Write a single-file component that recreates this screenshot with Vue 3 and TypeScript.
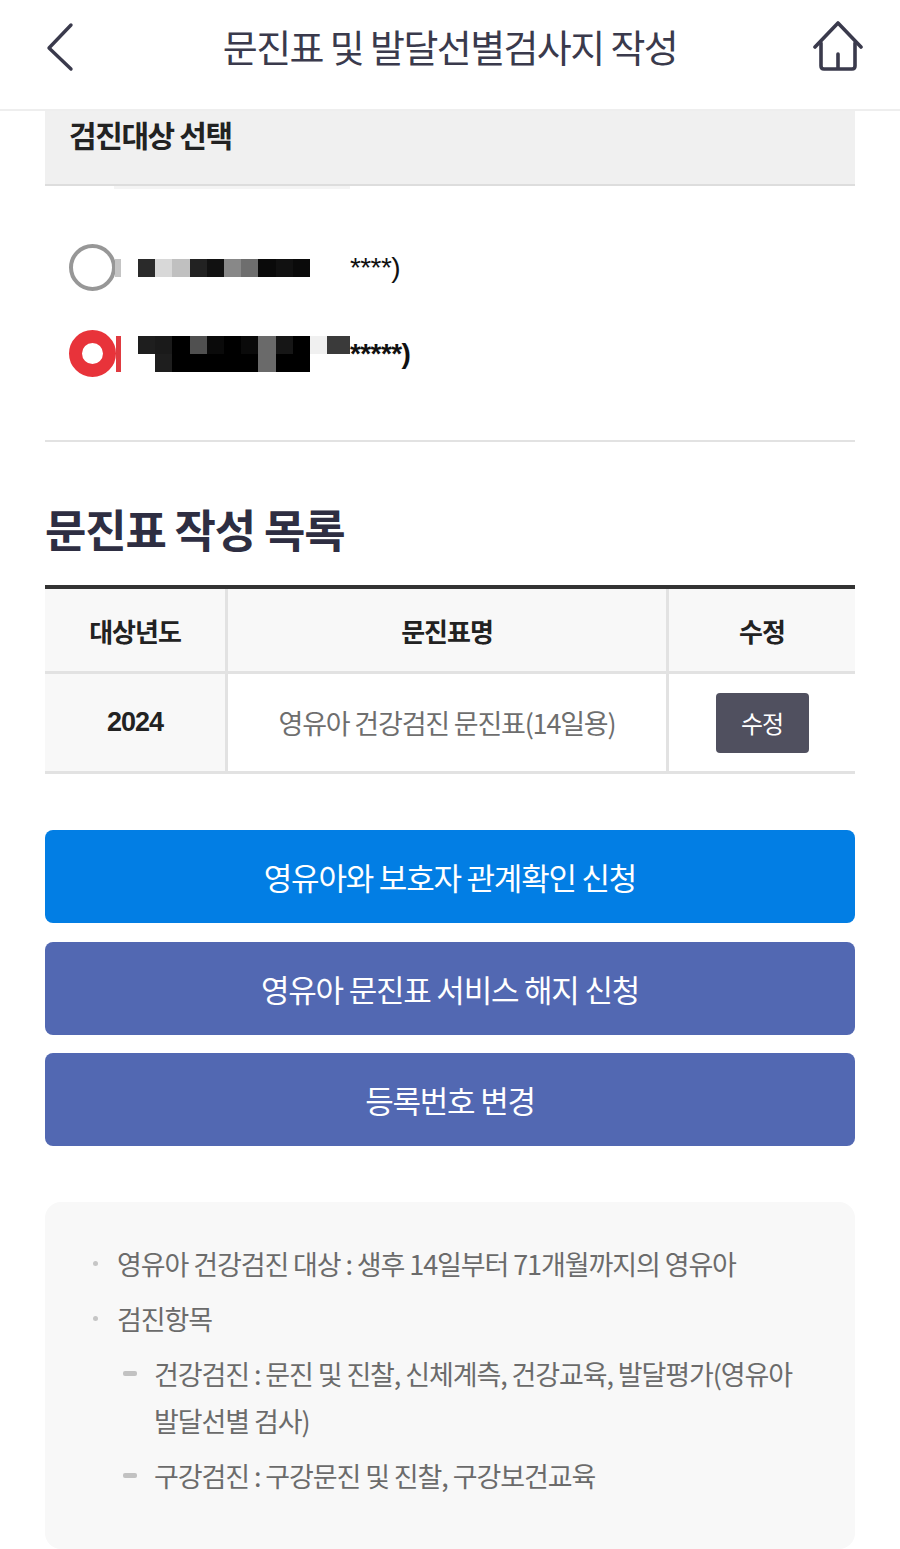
<script setup lang="ts">
const row1: string[] = ['#2a2a2a','#d8d8d8','#c0c0c0','#222','#111','#888','#6e6e6e','#0a0a0a','#111','#0a0a0a']
const row2a: string[] = ['#1e1e1e','#1a1a1a','#000','#505050','#0a0a0a','#000','#0a0a0a','#6a6a6a','#161616','#000','#f0f0f0']
const row2b: string[] = ['#fff','#1e1e1e','#000','#000','#000','#000','#000','#6a6a6a','#000','#000']
const tableRows = [{ year: '2024', name: '영유아 건강검진 문진표(14일용)' }]
</script>

<template>
  <div class="page">
    <header class="topbar">
      <svg class="back" width="32" height="50" viewBox="0 0 32 50" fill="none">
        <path d="M26 3 L4 26 L26 47" transform="translate(0 0)" stroke="#3a3a4c" stroke-width="3.4" stroke-linecap="round" stroke-linejoin="round" />
      </svg>
      <h1 class="title">문진표 및 발달선별검사지 작성</h1>
      <svg class="home" width="50" height="52" viewBox="0 0 50 52" fill="none">
        <path d="M2 26 L25 2 L48 26" stroke="#3a3a4c" stroke-width="3.6" stroke-linecap="round" stroke-linejoin="round" />
        <path d="M8 22 V45 Q8 48 11 48 H39 Q42 48 42 45 V22 M25 48 V33" stroke="#3a3a4c" stroke-width="3.6" stroke-linecap="round" stroke-linejoin="round" />
      </svg>
    </header>

    <main class="content">
      <div class="select-bar"><span>검진대상 선택</span></div>
      <div class="select-notch"></div>

      <div class="choices">
        <div class="choice">
          <span class="radio"></span>
          <span class="sliver grey"></span>
          <div class="mosaic">
            <div class="cells"><i v-for="(c, i) in row1" :key="i" :style="{ background: c }"></i></div>
          </div>
          <span class="masked">****)</span>
        </div>
        <div class="choice on">
          <span class="radio"></span>
          <span class="sliver red"></span>
          <div class="mosaic">
            <div class="cells"><i v-for="(c, i) in row2a" :key="i" :style="{ background: c }"></i><i class="wide"></i></div>
            <div class="cells"><i v-for="(c, i) in row2b" :key="i" :style="{ background: c }"></i></div>
          </div>
          <span class="masked">*****)</span>
        </div>
      </div>

      <h2 class="heading">문진표 작성 목록</h2>

      <div class="table">
        <div class="tr head">
          <div class="td c1">대상년도</div>
          <div class="td c2">문진표명</div>
          <div class="td c3">수정</div>
        </div>
        <div v-for="r in tableRows" :key="r.year" class="tr body">
          <div class="td c1 year">{{ r.year }}</div>
          <div class="td c2 name">{{ r.name }}</div>
          <div class="td c3"><button class="edit" type="button">수정</button></div>
        </div>
      </div>

      <div class="actions">
        <button class="action blue" type="button">영유아와 보호자 관계확인 신청</button>
        <button class="action indigo" type="button">영유아 문진표 서비스 해지 신청</button>
        <button class="action indigo" type="button">등록번호 변경</button>
      </div>

      <section class="notes">
        <ul class="list">
          <li>영유아 건강검진 대상 : 생후 14일부터 71개월까지의 영유아</li>
          <li>검진항목
            <ul class="sub">
              <li>건강검진 : 문진 및 진찰, 신체계측, 건강교육, 발달평가(영유아 발달선별 검사)</li>
              <li>구강검진 : 구강문진 및 진찰, 구강보건교육</li>
            </ul>
          </li>
        </ul>
      </section>
    </main>
  </div>
</template>

<style>
html, body { margin: 0; background: #fff; }
</style>

<style scoped>
.page {
  width: 900px;
  height: 1549px;
  overflow: hidden;
  background: #fff;
  font-family: "Noto Sans CJK KR", "Noto Sans", sans-serif;
}
.topbar {
  height: 109px;
  border-bottom: 2px solid #eeeeee;
  display: flex;
  align-items: flex-start;
  justify-content: space-between;
  padding: 0 37px 0 45px;
  box-sizing: content-box;
  position: relative;
  width: 818px;
}
.back { margin-top: 22px; }
.home { margin-top: 21px; }
.title {
  margin: 0;
  position: absolute;
  left: 0;
  right: 0;
  top: 20px;
  text-align: center;
  font-size: 38px;
  line-height: 52px;
  font-weight: 400;
  letter-spacing: -1.6px;
  color: #3a3a4c;
}
.content { padding: 0 45px; }
.select-bar {
  height: 73px;
  background: #f0f0f0;
  border-bottom: 2px solid #dddddd;
  padding-left: 24px;
}
.select-bar span {
  display: block;
  font-size: 30px;
  line-height: 46px;
  font-weight: 700;
  letter-spacing: -1.4px;
  color: #222;
}
.select-notch {
  width: 236px;
  height: 3px;
  margin-left: 69px;
  background: #f4f4f4;
}
.choices {
  padding: 55px 0 0 24px;
  height: 253px;
  box-sizing: border-box;
  border-bottom: 2px solid #e2e2e2;
  margin-top: 0;
}
.choice {
  display: flex;
  align-items: center;
  height: 47px;
  margin-bottom: 39px;
  position: relative;
}
.radio {
  width: 47px;
  height: 47px;
  box-sizing: border-box;
  border-radius: 50%;
  border: 4px solid #979797;
  background: #fff;
  flex: none;
}
.on .radio { border: 13px solid #e8333a; }
.sliver {
  width: 6px;
  height: 18px;
  margin-left: -1px;
  flex: none;
}
.sliver.grey { background: #c4c4c4; }
.sliver.red { height: 36px; background: #e03a40; width: 5px; margin-left: 0; }
.mosaic { margin-left: 17px; width: 212px; flex: none; }
.on .mosaic { margin-left: 17px; }
.cells { display: flex; height: 18px; }
.cells i { display: block; width: 17.2px; flex: none; }
.cells i.wide { width: 23px; background: #3a3a3a; }
.masked {
  font-family: "Liberation Sans", sans-serif;
  font-size: 28px;
  line-height: 34px;
  color: #111;
  letter-spacing: -0.6px;
}
.choice .masked { margin-left: 0; }
.choice:first-child .mosaic { width: 212px; }
.on .masked { font-weight: 700; margin-left: 0; }
.heading {
  margin: 56px 0 0;
  font-size: 45px;
  line-height: 62px;
  font-weight: 700;
  letter-spacing: -1.2px;
  color: #2e2e42;
}
.table {
  margin-top: 25px;
  border-top: 4px solid #333333;
}
.tr { display: flex; border-bottom: 3px solid #e2e2e2; }
.head { height: 82px; background: #f8f8f8; }
.body { height: 97px; }
.td {
  display: flex;
  align-items: center;
  justify-content: center;
  box-sizing: border-box;
  font-size: 26px;
  letter-spacing: -1px;
  color: #222;
}
.head .td { font-weight: 700; font-size: 26px; }
.c1 { width: 183px; border-right: 3px solid #e2e2e2; }
.c2 { width: 441px; border-right: 3px solid #e2e2e2; }
.c3 { width: 186px; }
.year { background: #f8f8f8; font-weight: 700; font-size: 27px; font-family: "Liberation Sans", sans-serif; }
.name { font-size: 27px; color: #6e6e6e; letter-spacing: -1.2px; }
.edit {
  width: 93px;
  height: 60px;
  border: 0;
  border-radius: 4px;
  background: #50505f;
  color: #fff;
  font: inherit;
  font-size: 24px;
  letter-spacing: -1px;
  padding: 0;
}
.actions {
  margin-top: 56px;
  display: flex;
  flex-direction: column;
  gap: 18.5px;
}
.action {
  height: 93px;
  border: 0;
  border-radius: 8px;
  color: #fff;
  font: inherit;
  font-size: 31px;
  letter-spacing: -1.2px;
  padding: 0;
}
.blue { background: #027ee4; }
.indigo { background: #5268b2; }
.notes {
  margin-top: 56px;
  height: 347px;
  box-sizing: border-box;
  background: #f8f8f8;
  border-radius: 16px;
  padding: 38px 48px 0 72px;
}
.list, .sub { list-style: none; margin: 0; padding: 0; }
.list > li {
  position: relative;
  font-size: 27px;
  line-height: 47px;
  letter-spacing: -1.1px;
  color: #6b6b6b;
  margin-bottom: 8px;
}
.list > li::before {
  content: "";
  position: absolute;
  left: -24px;
  top: 21px;
  width: 5px;
  height: 5px;
  border-radius: 50%;
  background: #c6c6c6;
}
.sub { margin-top: 8px; padding-left: 37px; }
.sub li { position: relative; margin-bottom: 8px; }
.sub li::before {
  content: "";
  position: absolute;
  left: -31px;
  top: 21px;
  width: 14px;
  height: 5px;
  border-radius: 2px;
  background: #c2c2c2;
}
</style>
